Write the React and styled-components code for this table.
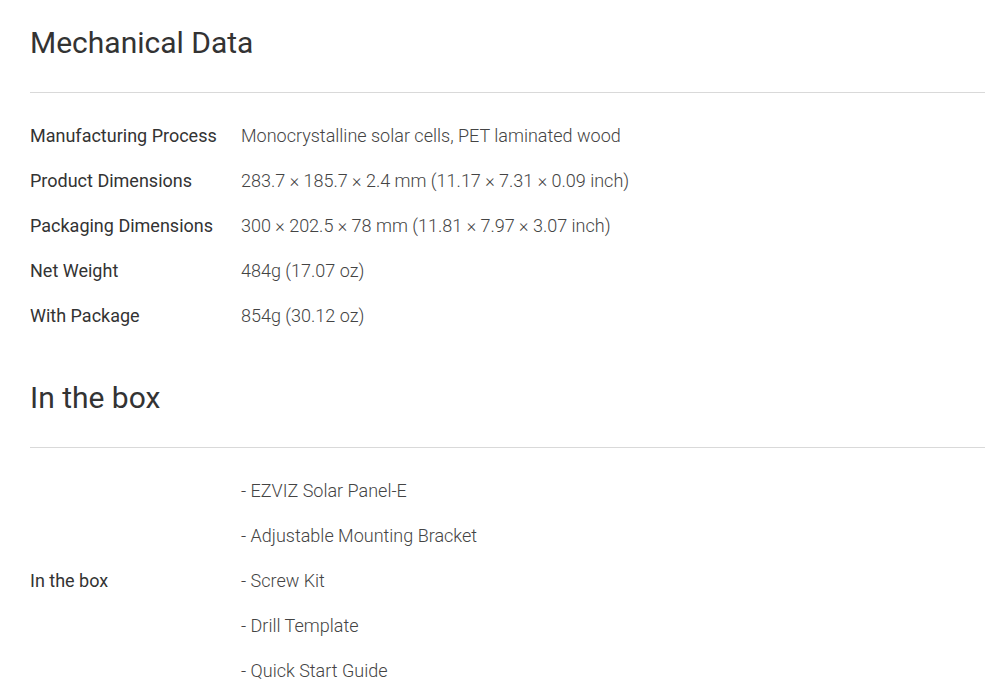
import React from 'react';
import styled, { createGlobalStyle } from 'styled-components';

const GlobalStyle = createGlobalStyle`
  body {
    margin: 0;
    background: #fff;
    font-family: Roboto, "Liberation Sans", Arial, sans-serif;
  }
`;

const mechanical = [
  ['Manufacturing Process', 'Monocrystalline solar cells, PET laminated wood'],
  ['Product Dimensions', '283.7 × 185.7 × 2.4 mm (11.17 × 7.31 × 0.09 inch)'],
  ['Packaging Dimensions', '300 × 202.5 × 78 mm (11.81 × 7.97 × 3.07 inch)'],
  ['Net Weight', '484g (17.07 oz)'],
  ['With Package', '854g (30.12 oz)'],
];

const boxItems = [
  'EZVIZ Solar Panel-E',
  'Adjustable Mounting Bracket',
  'Screw Kit',
  'Drill Template',
  'Quick Start Guide',
];

const App = () => (
  <>
    <GlobalStyle />
    <Page>
      <Section>
        <Title>Mechanical Data</Title>
        <Specs>
          {mechanical.map(([label, value]) => (
            <Row key={label}>
              <Label>{label}</Label>
              <Value>{value}</Value>
            </Row>
          ))}
        </Specs>
      </Section>
      <Section>
        <Title>In the box</Title>
        <Specs>
          <Row>
            <Label>In the box</Label>
            <ItemList>
              {boxItems.map((item) => (
                <Value key={item}>- {item}</Value>
              ))}
            </ItemList>
          </Row>
        </Specs>
      </Section>
    </Page>
  </>
);

const Page = styled.div`
  padding: 26px 11px 0 30px;
  display: flex;
  flex-direction: column;
  gap: 43px;
`;

const Section = styled.section`
  display: flex;
  flex-direction: column;
`;

const Title = styled.h2`
  margin: 0;
  font-size: 30px;
  line-height: 34px;
  font-weight: 400;
  color: #333;
  padding-bottom: 32px;
  border-bottom: 1px solid #d9d9d9;
`;

const Specs = styled.div`
  padding-top: 20px;
  display: flex;
  flex-direction: column;
`;

const Row = styled.div`
  display: flex;
  align-items: center;
`;

const Label = styled.div`
  width: 211px;
  flex-shrink: 0;
  font-size: 18px;
  line-height: 45px;
  color: #333;
`;

const ItemList = styled.div`
  display: flex;
  flex-direction: column;
`;

const Value = styled.div`
  font-size: 18px;
  line-height: 45px;
  font-weight: 300;
  color: #444;
`;

export default App;
